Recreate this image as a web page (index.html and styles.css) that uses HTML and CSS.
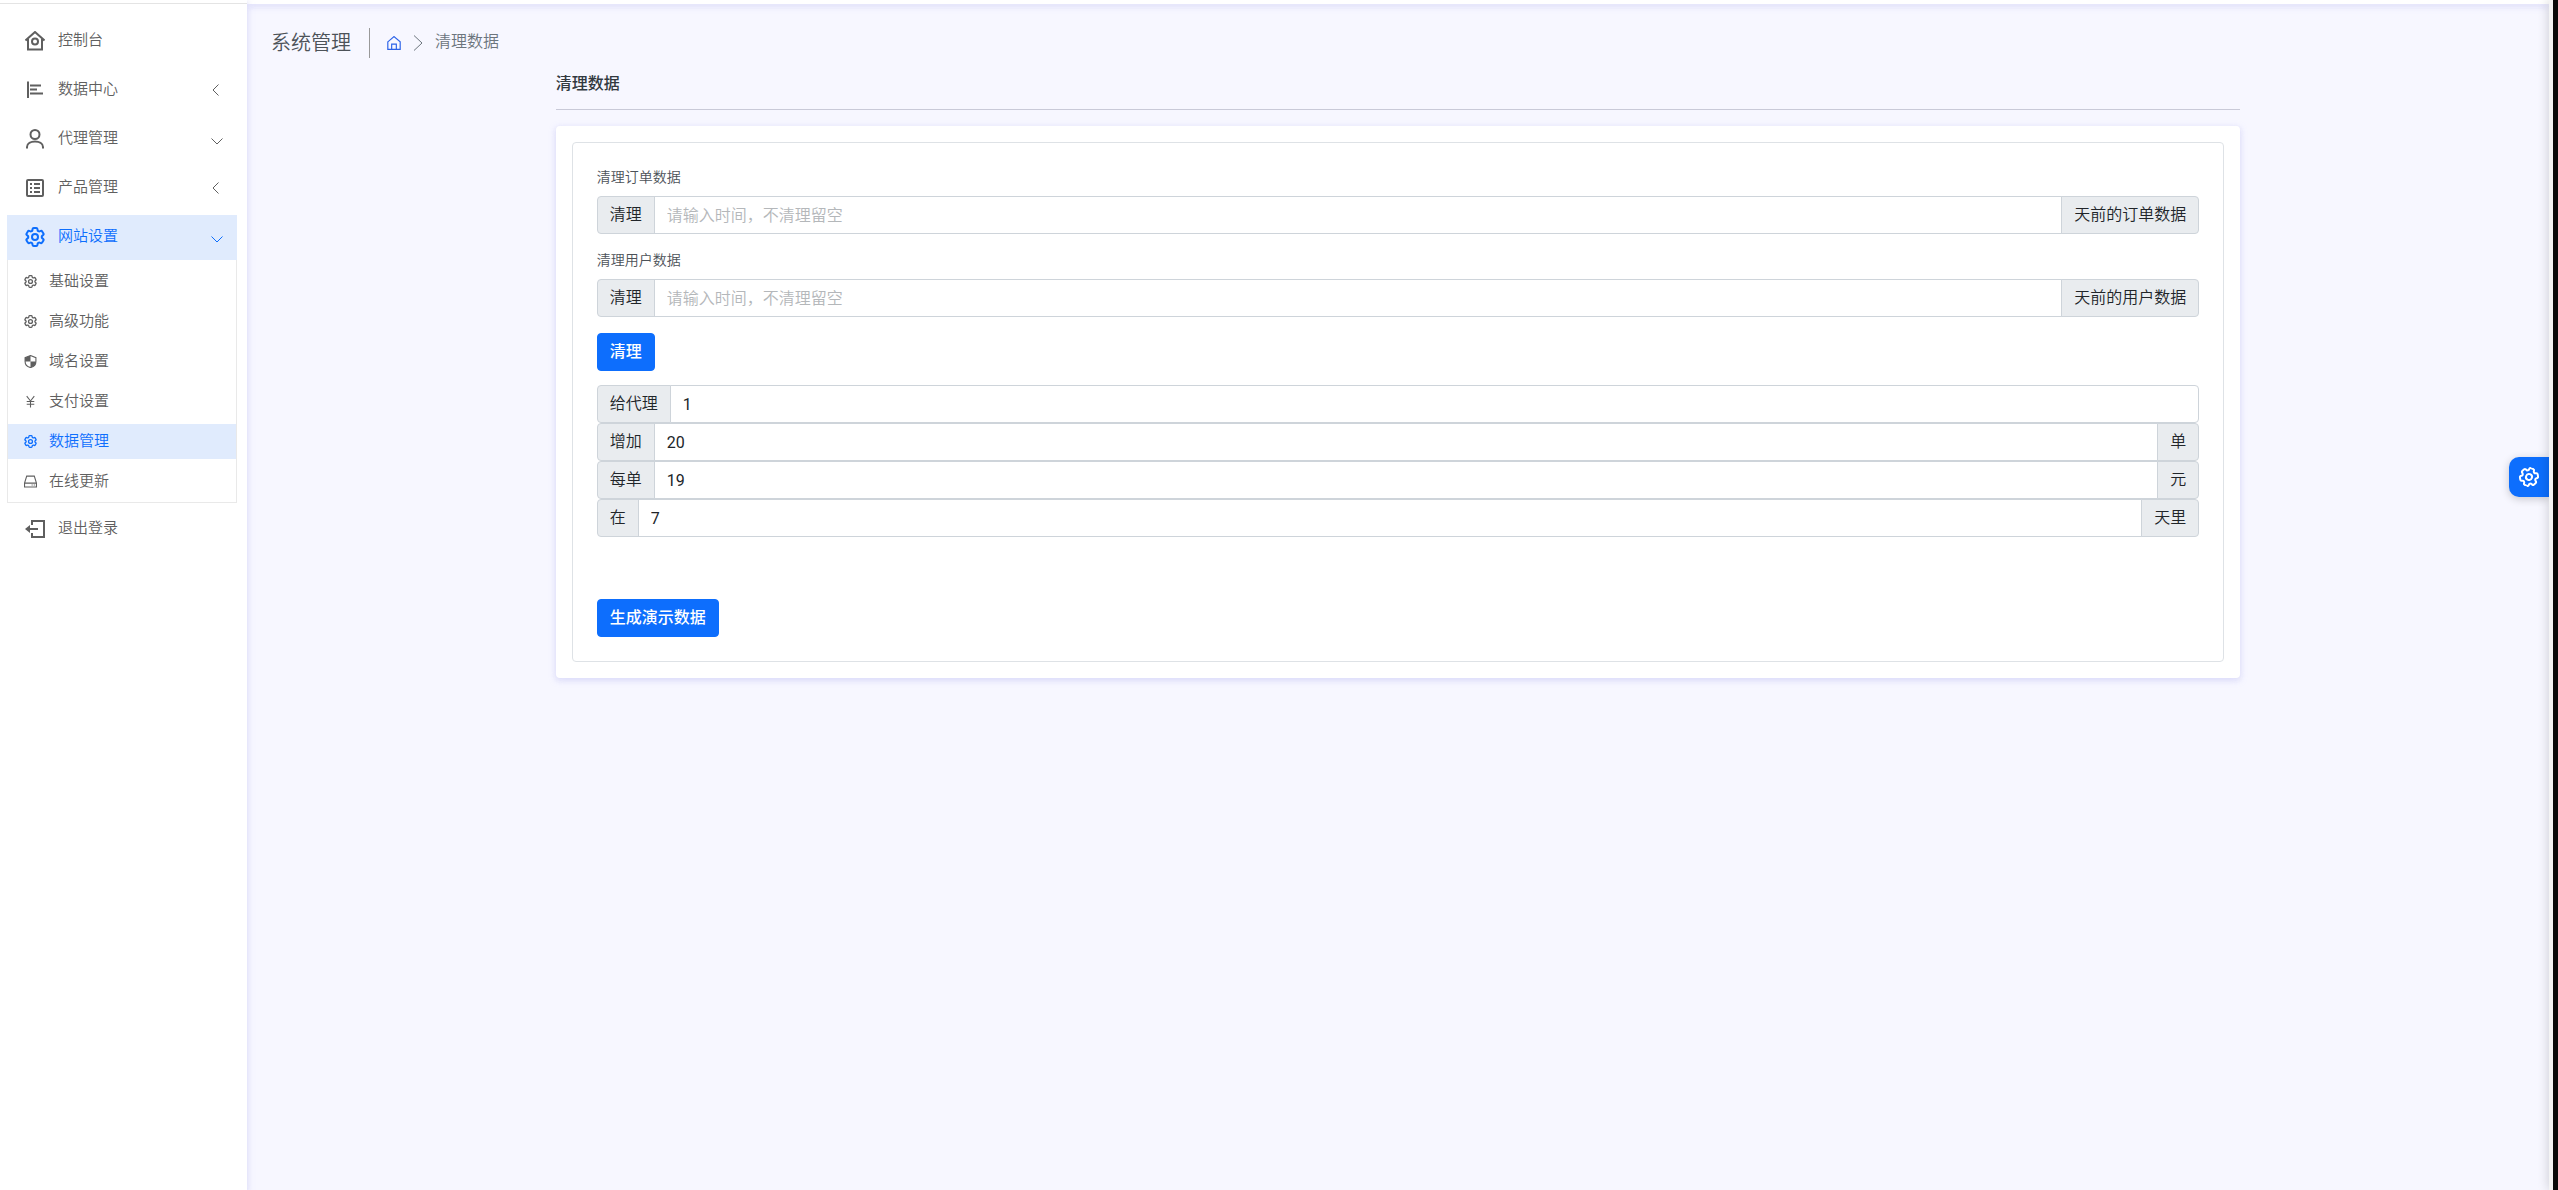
FILE: index.html
```html
<!DOCTYPE html>
<html lang="zh-CN">
<head>
	<meta charset="UTF-8">
	<title>清理数据</title>
	<link rel="stylesheet" href="styles.css">
</head>
<body>
	<svg class="defs" aria-hidden="true">
		<symbol id="gear" viewBox="2 2 20 20">
			<path d="M9.594 3.94c.09-.542.56-.94 1.11-.94h2.593c.55 0 1.02.398 1.11.94l.213 1.281c.063.374.313.686.645.87.074.04.147.083.22.127.325.196.72.257 1.075.124l1.217-.456a1.125 1.125 0 0 1 1.37.49l1.296 2.247a1.125 1.125 0 0 1-.26 1.431l-1.003.827c-.293.241-.438.613-.43.992a7.723 7.723 0 0 1 0 .255c-.008.378.137.75.43.991l1.004.827c.424.35.534.955.26 1.43l-1.298 2.247a1.125 1.125 0 0 1-1.369.491l-1.217-.456c-.355-.133-.75-.072-1.076.124a6.47 6.47 0 0 1-.22.128c-.331.183-.581.495-.644.869l-.213 1.281c-.09.543-.56.94-1.11.94h-2.594c-.55 0-1.019-.398-1.11-.94l-.213-1.281c-.062-.374-.312-.686-.644-.87a6.52 6.52 0 0 1-.22-.127c-.325-.196-.72-.257-1.076-.124l-1.217.456a1.125 1.125 0 0 1-1.369-.49l-1.297-2.247a1.125 1.125 0 0 1 .26-1.431l1.004-.827c.292-.24.437-.613.43-.991a6.932 6.932 0 0 1 0-.255c.007-.38-.138-.751-.43-.992l-1.004-.827a1.125 1.125 0 0 1-.26-1.43l1.297-2.247a1.125 1.125 0 0 1 1.37-.491l1.216.456c.356.133.751.072 1.076-.124.072-.044.146-.086.22-.128.332-.183.582-.495.644-.869l.214-1.28Z"/>
			<circle cx="12" cy="12" r="3"/>
		</symbol>
		<symbol id="left" viewBox="0 0 12 12"><path d="M7.500 0.500L2 6L7.500 11.500"/></symbol>
		<symbol id="down" viewBox="0 0 12 12"><path d="M0.500 5.500L6 11L11.500 5.500"/></symbol>
	</svg>
	<aside class="sidebar">
		<nav class="menu">
			<a class="item" href="#">
				<svg class="icon" viewBox="0 0 20 20"><path d="M0.500 9.500L10 1L19.500 9.500M3 8V18.500H17V8"/><circle cx="10" cy="10.500" r="3"/></svg>
				<span>控制台</span>
			</a>
			<a class="item" href="#">
				<svg class="icon" viewBox="0 0 20 20"><path d="M3 1.500V18M5 5.500H16M5 9.500H12M5 13.500H18"/></svg>
				<span>数据中心</span>
				<svg class="arrow"><use href="#left"/></svg>
			</a>
			<a class="item" href="#">
				<svg class="icon" viewBox="0 0 20 20"><circle cx="10" cy="5.500" r="4.500"/><path d="M2 19.500V18C2 10.500 18 10.500 18 18V19.500"/></svg>
				<span>代理管理</span>
				<svg class="arrow"><use href="#down"/></svg>
			</a>
			<a class="item" href="#">
				<svg class="icon" viewBox="0 0 20 20"><rect x="2" y="2" width="16" height="16" rx="1"/><path d="M5 6H7M9 6H15M5 10H7M9 10H15M5 14H7M9 14H15"/></svg>
				<span>产品管理</span>
				<svg class="arrow"><use href="#left"/></svg>
			</a>
			<a class="item active" href="#">
				<svg class="icon"><use href="#gear"/></svg>
				<span>网站设置</span>
				<svg class="arrow"><use href="#down"/></svg>
			</a>
			<div class="submenu">
				<a class="sub" href="#"><svg class="icon-sm"><use href="#gear"/></svg><span>基础设置</span></a>
				<a class="sub" href="#"><svg class="icon-sm"><use href="#gear"/></svg><span>高级功能</span></a>
				<a class="sub" href="#">
					<svg class="icon-sm" viewBox="0 0 12 12"><path d="M6 0.500L11 2.500V6C11 9 8.500 11 6 11.600C3.500 11 1 9 1 6V2.500Z"/><path class="fill" d="M6 0.500L1 2.500V6H6ZM6 6H11C11 9 8.500 11 6 11.600Z"/></svg>
					<span>域名设置</span>
				</a>
				<a class="sub" href="#">
					<svg class="icon-sm" viewBox="0 0 12 12"><path d="M2.500 1L6 5.500L9.500 1M6 5.500V11.500M2.500 6H9.500M2.500 8.500H9.500"/></svg>
					<span>支付设置</span>
				</a>
				<a class="sub active" href="#"><svg class="icon-sm"><use href="#gear"/></svg><span>数据管理</span></a>
				<a class="sub" href="#">
					<svg class="icon-sm" viewBox="0 0 12 12"><path d="M2.500 1H9.500L11.500 7.500V11H0.500V7.500ZM0.500 7.500H11.500M7 9.200H8M9 9.200H10"/></svg>
					<span>在线更新</span>
				</a>
			</div>
			<a class="item" href="#">
				<svg class="icon" viewBox="0 0 20 20"><path d="M7 6V2H19V18H7V14M2 10H13"/><path class="fill" d="M0 10L5 6V14Z"/></svg>
				<span>退出登录</span>
			</a>
		</nav>
	</aside>
	<div class="wrapper">
		<header class="topbar"></header>
		<main class="page">
			<div class="crumbs">
				<div class="section">系统管理</div>
				<a class="home" href="#" aria-label="首页"><svg class="icon-sm" viewBox="0 0 12 12"><path d="M0.700 5L6 0.500L11.300 5V11.500H0.700ZM4 11.500V7H8V11.500"/></svg></a>
				<svg class="next" viewBox="0 0 10 16"><path d="M1 0.500L9 8L1 15.500"/></svg>
				<span class="current">清理数据</span>
			</div>
			<div class="column">
				<h6>清理数据</h6>
				<hr>
				<div class="card">
					<form class="box">
						<label for="orders">清理订单数据</label>
						<div class="group">
							<span class="addon">清理</span>
							<input type="text" id="orders" placeholder="请输入时间，不清理留空">
							<span class="addon">天前的订单数据</span>
						</div>
						<label for="users">清理用户数据</label>
						<div class="group">
							<span class="addon">清理</span>
							<input type="text" id="users" placeholder="请输入时间，不清理留空">
							<span class="addon">天前的用户数据</span>
						</div>
						<button type="button" class="btn">清理</button>
						<div class="demo">
							<div class="group">
								<label class="addon" for="agent">给代理</label>
								<input type="text" id="agent" value="1">
							</div>
							<div class="group">
								<label class="addon" for="count">增加</label>
								<input type="text" id="count" value="20">
								<span class="addon">单</span>
							</div>
							<div class="group">
								<label class="addon" for="price">每单</label>
								<input type="text" id="price" value="19">
								<span class="addon">元</span>
							</div>
							<div class="group">
								<label class="addon" for="days">在</label>
								<input type="text" id="days" value="7">
								<span class="addon">天里</span>
							</div>
						</div>
						<button type="button" class="btn">生成演示数据</button>
					</form>
				</div>
			</div>
		</main>
		<button type="button" class="switcher" aria-label="设置"><svg class="icon"><use href="#gear"/></svg></button>
	</div>
	<div class="edge"></div>
</body>
</html>
```

FILE: styles.css
```css
*{box-sizing: border-box;}
body{margin: 0;min-height: 100vh;display: flex;background: #f7f7ff;color: #4c5258;font: 350 14px/21px Roboto,"Noto Sans CJK SC",sans-serif;}
a{color: inherit;text-decoration: none;}
svg{fill: none;stroke: currentColor;flex: none;}
.fill{fill: currentColor;stroke: none;}
.defs{position: absolute;width: 0;height: 0;}

.sidebar{width: 247px;flex: none;padding-top: 3px;background: #fff;box-shadow: 0 2px 6px rgba(218,218,253,.65),0 2px 6px rgba(206,206,238,.54);position: relative;z-index: 2;}
.menu{display: flex;flex-direction: column;gap: 4px;padding: 15px 10px 0 7px;border-top: 1px solid #e4e4e4;color: #5f5f5f;font-size: 15px;}
.item{display: flex;align-items: center;height: 45px;padding: 0 14px 2px 18px;}
.item span{margin-left: 13px;}
.icon{width: 20px;height: 20px;stroke-width: 2;}
.icon-sm{width: 13px;height: 13px;}
.sub .icon-sm use{stroke-width: 2;}
.arrow{width: 12px;height: 12px;margin-left: auto;}
.active{color: #0d6efd;background: #e0ebfd;}
.submenu{display: flex;flex-direction: column;gap: 5px;margin-top: -4px;padding: 4px 0 3px;border: 1px solid #e9e9e9;border-top: 0;}
.sub{display: flex;align-items: center;height: 35px;padding-left: 16px;}
.sub span{margin-left: 12px;}

.wrapper{flex: 1;min-width: 0;position: relative;}
.topbar{height: 4px;background: #fff;box-shadow: 0 2px 6px rgba(218,218,253,.65),0 2px 6px rgba(206,206,238,.54);}
.page{padding: 24px 12px;}
.crumbs{display: flex;align-items: center;height: 30px;padding-left: 12px;color: #6c757d;font-size: 16px;}
.section{margin-right: 17px;padding-right: 18px;border-right: 1px solid #999;color: #4c5258;font-size: 20px;line-height: 30px;}
.home{display: flex;color: #2b62e8;}
.home .icon-sm{width: 14px;height: 14px;}
.next{width: 10px;height: 16px;margin: 0 12px;}
.current{padding-bottom: 3px;}
.column{width: 75%;margin: 0 auto;padding: 14px 12px 12px;}
h6{margin: 0;color: #32393f;font-size: 16px;line-height: 24px;font-weight: 500;}
hr{margin: 13px 0 16px;border: 0;border-top: 1px solid #c9cad8;}
.card{padding: 16px;background: #fff;border-radius: 4px;box-shadow: 0 2px 6px rgba(218,218,253,.65),0 2px 6px rgba(206,206,238,.54);}
.box{padding: 24px;border: 1px solid #dee2e6;border-radius: 4px;}
.box > label{display: block;margin-bottom: 8px;}
.group{display: flex;margin-bottom: 16px;}
.addon,.group input{height: 38px;padding: 6px 12px;border: 1px solid #ced4da;color: #212529;font-family: inherit;font-size: 16px;line-height: 24px;}
.addon{background: #e9ecef;white-space: nowrap;}
.group input{flex: 1;min-width: 0;margin-left: -1px;background: #fff;border-radius: 0;outline: 0;}
.group input + .addon{margin-left: -1px;}
.group > :first-child{border-radius: 4px 0 0 4px;}
.group > :last-child{border-radius: 0 4px 4px 0;}
input::placeholder{color: #b4b7ba;font-weight: 350;}
.btn{display: block;height: 38px;padding: 6px 12px;border: 1px solid #0d6efd;border-radius: 4px;background: #0d6efd;color: #fff;font: 500 16px/24px Roboto,"Noto Sans CJK SC",sans-serif;}
.demo{margin: 14px 0 62px;}
.demo .group{margin: 0;}

.switcher{position: fixed;right: 9px;top: 457px;width: 40px;height: 40px;padding: 0 0 0 10px;border: 0;border-radius: 10px 0 0 10px;background: #0d6efd;color: #fff;box-shadow: 0 2px 8px rgba(0,0,0,.2);display: flex;align-items: center;}
.switcher .icon{transform: rotate(20deg);}
.edge{width: 9px;flex: none;background: #f4f4f4;border-right: 5px solid #0a0a0a;box-shadow: 0 0 12px rgba(0,0,0,.2);position: relative;}
```
